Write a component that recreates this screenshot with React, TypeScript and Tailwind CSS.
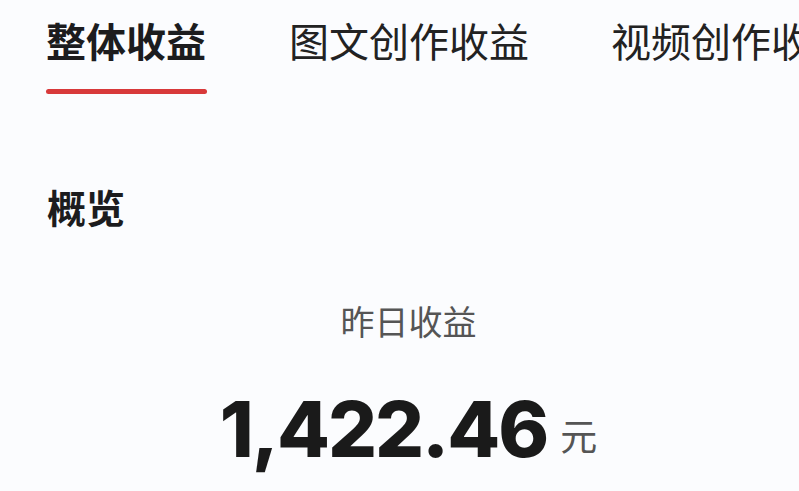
const tabs = ["整体收益", "图文创作收益", "视频创作收益"];

const cjk = { fontFamily: '"Noto Sans CJK SC", "Noto Sans", sans-serif' };

export default function App() {
  return (
    <div className="h-[491px] w-[799px] overflow-hidden bg-[#fbfcfe]" style={cjk}>
      <div className="flex gap-[82px] whitespace-nowrap pl-[46px] pt-[12px]">
        {tabs.map((tab, i) => (
          <div key={tab} className="flex flex-col">
            <span
              className={
                i === 0
                  ? "text-[40px] leading-[56px] font-bold text-[#1c1c1e]"
                  : "text-[40px] leading-[56px] font-normal text-[#222]"
              }
            >
              {tab}
            </span>
            {i === 0 ? <div className="mt-[21px] h-[5px] w-[161px] rounded-full bg-[#d8393a]" /> : null}
          </div>
        ))}
      </div>

      <h2 className="mt-[86px] pl-[47px] text-[39px] leading-[52px] font-bold text-[#1c1c1e]">概览</h2>

      <div className="mt-[66px] flex flex-col items-center pl-[18px]">
        <p className="text-[34px] leading-[46px] text-[#555]">昨日收益</p>
        <div className="mt-[40px] flex items-baseline">
          <span
            className="text-[77px] leading-[90px] font-extrabold tracking-[-2px] text-[#1a1a1a]"
            style={{ fontFamily: 'Inter, "Noto Sans", sans-serif' }}
          >
            1,422.46
          </span>
          <span className="relative -top-[6px] ml-[13px] text-[37px] text-[#555]">元</span>
        </div>
      </div>
    </div>
  );
}
